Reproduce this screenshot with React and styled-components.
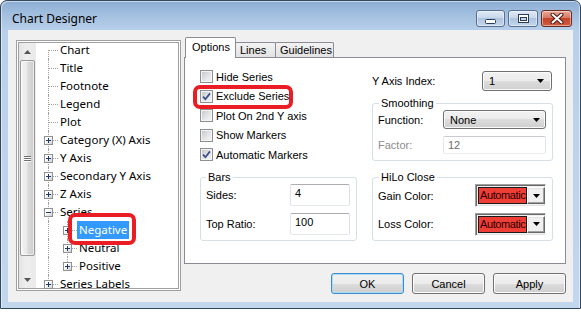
import React from 'react';
import styled, { createGlobalStyle } from 'styled-components';

const UI = '"Noto Sans", "Segoe UI", sans-serif';
const SANS = '"Liberation Sans", Arial, sans-serif';

const GlobalStyle = createGlobalStyle`
  html, body {
    margin: 0;
    padding: 0;
    background: #fff;
  }
  body {
    width: 581px;
    height: 333px;
    overflow: hidden;
  }
  * {
    box-sizing: border-box;
  }
`;

const Window = styled.div`
  width: 581px;
  height: 309px;
  display: flex;
  flex-direction: column;
  border: 1px solid #34465c;
  border-radius: 7px 7px 0 0;
  background: linear-gradient(to bottom, #8caed3 0, #a6c2e1 16px, #b8d0ea 30px, #c2d7ed 100%);
  box-shadow: inset 1px 1px 0 rgba(255, 255, 255, 0.5), inset -1px 0 0 rgba(255, 255, 255, 0.5);
`;

const TitleBar = styled.div`
  height: 29px;
  flex-shrink: 0;
  display: flex;
  align-items: flex-start;
  padding: 0 8px 0 11px;
`;

const Title = styled.div`
  margin-top: 10px;
  font: 12px/16px ${UI};
  color: #000;
`;

const Captions = styled.div`
  margin-left: auto;
  margin-top: 9px;
  display: flex;
  gap: 3px;
`;

const CaptionButton = styled.div`
  width: ${p => p.$w}px;
  height: 17px;
  display: flex;
  align-items: center;
  justify-content: center;
  border: 1px solid ${p => (p.$close ? '#6b2a1f' : '#5a7090')};
  border-radius: 3px;
  background: ${p =>
    p.$close
      ? 'linear-gradient(#e9a99a 0%, #d77a64 45%, #c4432b 50%, #d15b40 100%)'
      : 'linear-gradient(#dfe9f5 0%, #c8d8eb 45%, #aec5e0 50%, #c3d6eb 100%)'};
  box-shadow: inset 0 0 0 1px rgba(255, 255, 255, 0.45);
  svg {
    margin-top: ${p => p.$drop || 0}px;
  }
`;

const Client = styled.div`
  flex: 1;
  margin: 0 7px 6px 7px;
  padding: 7px 7px 8px 8px;
  background: #f0f0f0;
  display: grid;
  grid-template-columns: 165px 1fr;
  column-gap: 3px;
  min-height: 0;
`;

/* ---------- tree ---------- */

const TreeBox = styled.div`
  margin: 3px 0;
  padding: 2px;
  border: 1px solid #a0a0a0;
  box-shadow: inset 0 0 0 1px #fff, inset 0 0 0 2px #a0a0a0;
  background: #fff;
  display: flex;
  overflow: hidden;
`;

const ScrollBar = styled.div`
  width: 17px;
  flex-shrink: 0;
  display: flex;
  flex-direction: column;
  background: linear-gradient(to right, #e3e3e3, #eeeeee 40%, #eaeaea);
`;

const ScrollArrow = styled.div`
  height: 17px;
  flex-shrink: 0;
  display: flex;
  align-items: center;
  justify-content: center;
`;

const Thumb = styled.div`
  height: 196px;
  margin: 0 1px;
  border: 1px solid #9a9a9a;
  border-radius: 2px;
  background: linear-gradient(to right, #f4f4f4 0%, #e9e9e9 45%, #d9d9d9 55%, #cdcdcd 100%);
  box-shadow: inset 0 0 0 1px rgba(255, 255, 255, 0.6);
  display: flex;
  flex-direction: column;
  align-items: center;
  justify-content: center;
  gap: 1px;
`;

const Grip = styled.span`
  width: 7px;
  height: 1px;
  background: #6f6f6f;
  box-shadow: 0 1px 0 #fff;
`;

const TrackGap = styled.div`
  flex: 1;
`;

const TreeList = styled.div`
  flex: 1;
  margin-top: -2px;
  padding-left: 3px;
  font: 11.5px/18px ${UI};
  color: #000;
`;

const TreeRow = styled.div`
  display: flex;
  height: 18px;
`;

const Cell = styled.span`
  position: relative;
  width: 19px;
  height: 18px;
  flex-shrink: 0;
  &::before {
    content: '';
    position: absolute;
    left: 9px;
    top: ${p => (p.$line === 'first' ? 9 : 0)}px;
    height: ${p => (p.$line === 'first' || p.$line === 'last' ? 9 : 18)}px;
    border-left: 1px dotted #a0a0a0;
  }
  &::after {
    content: '';
    display: ${p => (p.$line === 'pass' ? 'none' : 'block')};
    position: absolute;
    left: 10px;
    top: 9px;
    width: 9px;
    border-top: 1px dotted #a0a0a0;
  }
`;

const Expander = styled.span`
  position: absolute;
  z-index: 1;
  left: 5px;
  top: 5px;
  width: 9px;
  height: 9px;
  border: 1px solid #919191;
  background: linear-gradient(135deg, #ffffff 35%, #cfcfcf 100%);
  &::before {
    content: '';
    position: absolute;
    left: 1px;
    top: 3px;
    width: 5px;
    height: 1px;
    background: #1d3a66;
  }
  &::after {
    content: '';
    display: ${p => (p.$open ? 'none' : 'block')};
    position: absolute;
    left: 3px;
    top: 1px;
    width: 1px;
    height: 5px;
    background: #1d3a66;
  }
`;

const NodeLabel = styled.span`
  position: relative;
  height: 18px;
  padding: 0 2px;
  white-space: nowrap;
  background: ${p => (p.$selected ? '#3399ff' : 'transparent')};
  color: ${p => (p.$selected ? '#fff' : '#000')};
`;

const Ring = styled.span`
  position: absolute;
  z-index: 2;
  left: ${p => p.$l}px;
  top: ${p => p.$t}px;
  width: ${p => p.$w}px;
  height: ${p => p.$h}px;
  border: 4px solid #ea1c24;
  border-radius: 7px;
  pointer-events: none;
`;

/* ---------- tabs ---------- */

const Side = styled.div`
  display: flex;
  flex-direction: column;
  min-width: 0;
`;

const TabStrip = styled.div`
  height: 20px;
  display: flex;
  align-items: flex-end;
  padding-left: 1px;
  position: relative;
  z-index: 1;
`;

const Tab = styled.div`
  width: ${p => p.$w}px;
  height: ${p => (p.$active ? 21 : 15)}px;
  margin-bottom: ${p => (p.$active ? -1 : 0)}px;
  margin-left: ${p => (p.$active ? 0 : -1)}px;
  position: relative;
  z-index: ${p => (p.$active ? 2 : 1)};
  border: 1px solid #898c95;
  border-bottom: none;
  border-radius: 2px 2px 0 0;
  padding: ${p => (p.$active ? '2px 0 0 6px' : '0 0 0 4px')};
  background: ${p => (p.$active ? '#fff' : 'linear-gradient(#f3f3f3, #e2e2e2)')};
  font: 11px/14px ${SANS};
  color: #000;
  white-space: nowrap;
`;

const Panel = styled.div`
  flex: 1;
  border: 1px solid #898c95;
  background: #fff;
  padding: 9px 12px 0 15px;
  display: grid;
  grid-template-columns: 157px 181px;
  grid-template-rows: 103px 71px;
  column-gap: 15px;
  font: 11px ${SANS};
  color: #000;
`;

const CheckList = styled.div`
  display: flex;
  flex-direction: column;
`;

const CheckRow = styled.div`
  position: relative;
  height: 19.5px;
  display: flex;
  align-items: center;
  gap: 3px;
`;

const CheckBox = styled.span`
  width: 13px;
  height: 13px;
  flex-shrink: 0;
  border: 1px solid #8e8f8f;
  background: linear-gradient(135deg, #c0c3c8 0%, #e4e5e7 55%, #f6f6f6 100%);
  box-shadow: inset 0 0 0 1px #f4f4f4;
  display: flex;
  align-items: center;
  justify-content: center;
`;

const TopRight = styled.div`
  display: flex;
  flex-direction: column;
`;

const IndexRow = styled.div`
  margin-top: 4px;
  height: 20px;
  display: flex;
  align-items: center;
  justify-content: space-between;
  padding-right: 1px;
`;

const Group = styled.fieldset`
  margin: ${p => p.$top || 0}px 0 0 0;
  padding: 0 6px ${p => p.$bottom || 5}px 5px;
  border: 1px solid #d5dfe5;
  border-radius: 3px;
  min-width: 0;
`;

const Legend = styled.legend`
  padding: 0 2px;
  margin-left: ${p => p.$shift || 0}px;
  font: 11px/14px ${SANS};
`;

const Fields = styled.div`
  display: flex;
  flex-direction: column;
  gap: ${p => p.$gap || 7}px;
`;

const Field = styled.div`
  height: ${p => p.$h || 22}px;
  display: flex;
  align-items: center;
  justify-content: space-between;
  color: ${p => (p.$disabled ? '#8d8d8d' : '#000')};
`;

const Select = styled.div`
  width: ${p => p.$w}px;
  height: ${p => p.$h}px;
  border: 1px solid #707070;
  border-radius: 3px;
  background: linear-gradient(#f2f2f2 0%, #ebebeb 50%, #dddddd 50%, #cfcfcf 100%);
  box-shadow: inset 0 0 0 1px #fbfbfb;
  display: flex;
  align-items: center;
  padding: 0 ${p => p.$pr || 6}px 0 6px;
  svg {
    margin-left: auto;
  }
`;

const TextBox = styled.div`
  width: ${p => p.$w}px;
  height: ${p => p.$h}px;
  border: 1px solid;
  border-color: #abadb3 #dbdfe6 #e3e9ef #e2e3ea;
  border-radius: 2px;
  background: #fff;
  padding: 2px 4px 0;
  color: ${p => (p.$disabled ? '#6d6d6d' : '#000')};
  ${p => p.$disabled && 'border-color: #c9cbd0 #e3e5ea #e9edf1 #e6e7ec;'}
`;

const ColorPick = styled.div`
  width: 71px;
  height: 23px;
  display: flex;
  padding: 2px 0 2px 2px;
  border: 1px solid;
  border-color: #a0a0a0 #fff #fff #a0a0a0;
  box-shadow: inset 1px 1px 0 #696969, inset -1px -1px 0 #e3e3e3;
  background: #f0f0f0;
`;

const Swatch = styled.div`
  flex: 1;
  min-width: 0;
  overflow: hidden;
  white-space: nowrap;
  border: 1px solid #1a1a1a;
  background: #ef3e36;
  color: #2a0000;
  padding-left: 1px;
  line-height: 15px;
  letter-spacing: -0.4px;
`;

const DropButton = styled.div`
  width: 18px;
  flex-shrink: 0;
  border: 1px solid;
  border-color: #fff #696969 #696969 #fff;
  box-shadow: inset -1px -1px 0 #a0a0a0, inset 1px 1px 0 #e3e3e3;
  background: #f0f0f0;
  display: flex;
  align-items: center;
  justify-content: center;
`;

const ButtonRow = styled.div`
  margin-top: 9px;
  display: flex;
  justify-content: flex-end;
  gap: 8px;
`;

const Button = styled.div`
  width: 73px;
  height: 21px;
  border: 1px solid ${p => (p.$default ? '#3c8ccc' : '#707070')};
  border-radius: 3px;
  background: linear-gradient(#f2f2f2 0%, #ebebeb 50%, #dddddd 50%, #cfcfcf 100%);
  box-shadow: inset 0 0 0 1px ${p => (p.$default ? '#a8dcf7' : '#fcfcfc')};
  display: flex;
  align-items: center;
  justify-content: center;
  font: 11px ${SANS};
  color: #000;
`;

const Caret = ({ color = '#000' }) => (
  <svg width="7" height="4" viewBox="0 0 7 4">
    <polygon points="0,0 7,0 3.5,4" fill={color} />
  </svg>
);

const UpArrow = () => (
  <svg width="7" height="4" viewBox="0 0 7 4">
    <polygon points="0,4 7,4 3.5,0" fill="#555" />
  </svg>
);

const Check = ({ checked }) => (
  <CheckBox>
    {checked && (
      <svg width="9" height="9" viewBox="0 0 9 9">
        <path d="M1 4.6 L3.4 7.2 L8 1.4" fill="none" stroke="#3b4e88" strokeWidth="1.7" />
      </svg>
    )}
  </CheckBox>
);

const treeItems = [
  { label: 'Chart', lines: ['first'] },
  { label: 'Title', lines: ['mid'] },
  { label: 'Footnote', lines: ['mid'] },
  { label: 'Legend', lines: ['mid'] },
  { label: 'Plot', lines: ['mid'] },
  { label: 'Category (X) Axis', lines: ['mid'], box: 'closed' },
  { label: 'Y Axis', lines: ['mid'], box: 'closed' },
  { label: 'Secondary Y Axis', lines: ['mid'], box: 'closed' },
  { label: 'Z Axis', lines: ['mid'], box: 'closed' },
  { label: 'Series', lines: ['mid'], box: 'open' },
  { label: 'Negative', lines: ['pass', 'mid'], box: 'closed', selected: true },
  { label: 'Neutral', lines: ['pass', 'mid'], box: 'closed' },
  { label: 'Positive', lines: ['pass', 'last'], box: 'closed' },
  { label: 'Series Labels', lines: ['mid'], box: 'closed' },
];

const checks = [
  { label: 'Hide Series', checked: false },
  { label: 'Exclude Series', checked: true, marked: true },
  { label: 'Plot On 2nd Y axis', checked: false },
  { label: 'Show Markers', checked: false },
  { label: 'Automatic Markers', checked: true },
];

const Tree = () => (
  <TreeBox>
    <ScrollBar>
      <ScrollArrow>
        <UpArrow />
      </ScrollArrow>
      <Thumb>
        <Grip />
        <Grip />
        <Grip />
      </Thumb>
      <TrackGap />
      <ScrollArrow>
        <Caret color="#555" />
      </ScrollArrow>
    </ScrollBar>
    <TreeList>
      {treeItems.map(item => (
        <TreeRow key={item.label}>
          {item.lines.map((line, i) => (
            <Cell key={i} $line={line}>
              {item.box && i === item.lines.length - 1 && <Expander $open={item.box === 'open'} />}
            </Cell>
          ))}
          <NodeLabel $selected={item.selected}>
            {item.label}
            {item.selected && <Ring $l={-9} $t={-8} $w={68} $h={32} />}
          </NodeLabel>
        </TreeRow>
      ))}
    </TreeList>
  </TreeBox>
);

const App = () => (
  <>
    <GlobalStyle />
    <Window>
      <TitleBar>
        <Title>Chart Designer</Title>
        <Captions>
          <CaptionButton $w={29} $drop={5}>
            <svg width="11" height="5" viewBox="0 0 11 5">
              <rect x="0.5" y="0.5" width="10" height="4" rx="1" fill="#fff" stroke="#2b3c55" />
            </svg>
          </CaptionButton>
          <CaptionButton $w={30}>
            <svg width="11" height="9" viewBox="0 0 11 9">
              <rect x="0.5" y="0.5" width="10" height="8" fill="#fff" stroke="#2b3c55" />
              <rect x="2.5" y="3.5" width="6" height="3" fill="#c5d6ea" stroke="#2b3c55" />
            </svg>
          </CaptionButton>
          <CaptionButton $w={31} $close>
            <svg width="14" height="11" viewBox="0 0 14 11">
              <path d="M2.5 1.5 L11.5 9.5 M11.5 1.5 L2.5 9.5" stroke="#4a1a12" strokeWidth="4" strokeLinecap="round" />
              <path d="M2.5 1.5 L11.5 9.5 M11.5 1.5 L2.5 9.5" stroke="#fff" strokeWidth="2" strokeLinecap="round" />
            </svg>
          </CaptionButton>
        </Captions>
      </TitleBar>

      <Client>
        <Tree />
        <Side>
          <TabStrip>
            <Tab $active $w={51}>Options</Tab>
            <Tab $w={41}>Lines</Tab>
            <Tab $w={59}>Guidelines</Tab>
          </TabStrip>
          <Panel>
            <CheckList>
              {checks.map(c => (
                <CheckRow key={c.label}>
                  <Check checked={c.checked} />
                  {c.label}
                  {c.marked && <Ring $l={-7} $t={-2} $w={100} $h={24} />}
                </CheckRow>
              ))}
            </CheckList>

            <TopRight>
              <IndexRow>
                Y Axis Index:
                <Select $w={70} $h={20} $pr={7}>
                  1
                  <Caret />
                </Select>
              </IndexRow>
              <Group $top={5} $bottom={6}>
                <Legend $shift={1}>Smoothing</Legend>
                <Fields>
                  <Field $h={19}>
                    Function:
                    <Select $w={103} $h={19} $pr={5}>
                      None
                      <Caret />
                    </Select>
                  </Field>
                  <Field $h={18} $disabled>
                    Factor:
                    <TextBox $w={103} $h={18} $disabled>12</TextBox>
                  </Field>
                </Fields>
              </Group>
            </TopRight>

            <Group>
              <Legend>Bars</Legend>
              <Fields>
                <Field>
                  Sides:
                  <TextBox $w={60} $h={22}>4</TextBox>
                </Field>
                <Field>
                  Top Ratio:
                  <TextBox $w={60} $h={22}>100</TextBox>
                </Field>
              </Fields>
            </Group>

            <Group>
              <Legend $shift={1}>HiLo Close</Legend>
              <Fields $gap={6}>
                <Field $h={23}>
                  Gain Color:
                  <ColorPick>
                    <Swatch>Automatic</Swatch>
                    <DropButton>
                      <Caret />
                    </DropButton>
                  </ColorPick>
                </Field>
                <Field>
                  Loss Color:
                  <ColorPick>
                    <Swatch>Automatic</Swatch>
                    <DropButton>
                      <Caret />
                    </DropButton>
                  </ColorPick>
                </Field>
              </Fields>
            </Group>
          </Panel>
          <ButtonRow>
            <Button $default>OK</Button>
            <Button>Cancel</Button>
            <Button>Apply</Button>
          </ButtonRow>
        </Side>
      </Client>
    </Window>
  </>
);

export default App;
